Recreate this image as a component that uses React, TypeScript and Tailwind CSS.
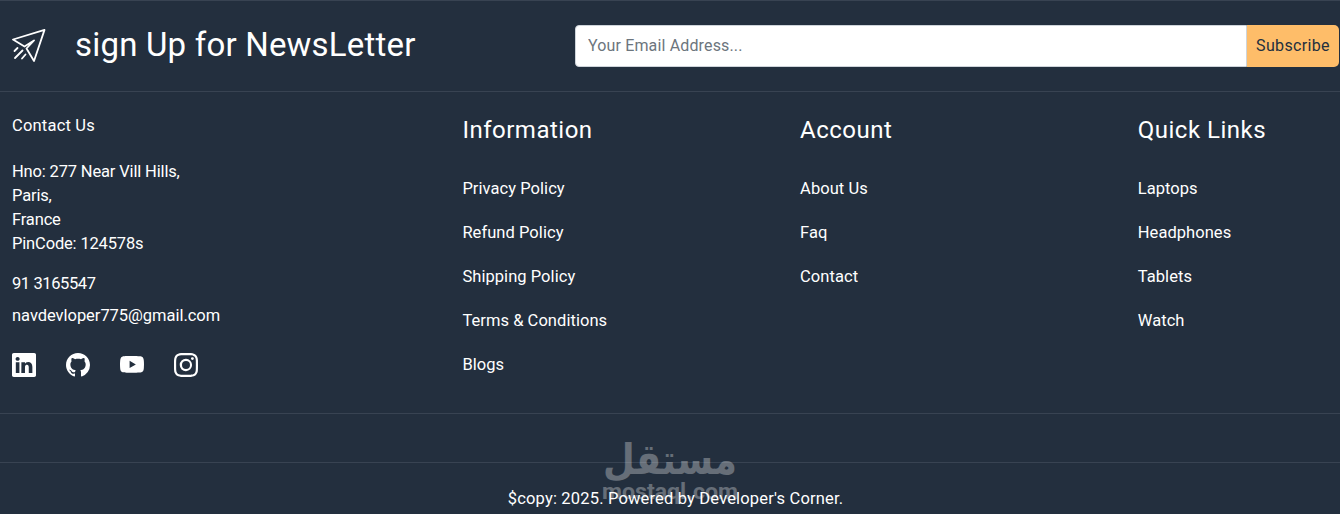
import { BsGithub, BsInstagram, BsLinkedin, BsYoutube } from 'react-icons/bs';

const socials = [
  { label: 'LinkedIn', Icon: BsLinkedin },
  { label: 'GitHub', Icon: BsGithub },
  { label: 'YouTube', Icon: BsYoutube },
  { label: 'Instagram', Icon: BsInstagram },
];

function NewsletterIcon() {
  return (
    <svg
      className="ml-3 shrink-0"
      width="34"
      height="34"
      viewBox="0 0 34 34"
      fill="none"
      stroke="white"
      strokeWidth="1.8"
      strokeLinecap="round"
      strokeLinejoin="round"
    >
      <path d="M1 10.500 32.500 .9 22 32 14.500 19.500 22 11.500 12.500 17.500Z" />
      <path d="M5.500 19 2.500 22M10.500 21.500 3 29M13.500 25.500 10 29.500" />
    </svg>
  );
}

function SubscribeForm() {
  return (
    <div className="flex h-[42px] w-[764px]">
      <input
        type="text"
        className="min-w-0 flex-1 rounded-l-[4px] border border-[#ced4da] bg-white px-3 tracking-[0.15px] text-[#212529] placeholder:text-[#6c757d]"
        placeholder="Your Email Address..."
      />
      <button className="w-[92px] rounded-r-[5px] bg-[#febd69] text-base tracking-[0.35px] text-[#232f3e]">
        Subscribe
      </button>
    </div>
  );
}

function LinkColumn({ title, links }: { title: string; links: string[] }) {
  return (
    <div className="w-[337.700px] shrink-0">
      <h4 className="mb-6 text-2xl leading-[29px] tracking-[0.5px]">{title}</h4>
      <div className="flex flex-col items-start">
        {links.map((link) => (
          <a key={link} href="#" className="mb-1 py-2 text-[16.500px] leading-6 tracking-[0.05px]">
            {link}
          </a>
        ))}
      </div>
    </div>
  );
}

function Watermark() {
  return (
    <svg
      className="pointer-events-none absolute top-[436px] left-[600px] overflow-visible opacity-30"
      width="140"
      height="72"
      viewBox="0 0 140 72"
      fill="white"
    >
      <text
        x="70"
        y="38"
        fontSize="42"
        textAnchor="middle"
        textLength="134"
        lengthAdjust="spacingAndGlyphs"
        direction="rtl"
        className="font-['DejaVu_Sans',sans-serif] font-bold"
      >
        مستقل
      </text>
      <text
        x="2"
        y="62.500"
        fontSize="22"
        textLength="136"
        lengthAdjust="spacingAndGlyphs"
        className="font-['Roboto',sans-serif] font-bold"
      >
        mostaql.com
      </text>
    </svg>
  );
}

export default function App() {
  return (
    <footer className="relative h-[514px] overflow-hidden bg-[#232f3e] font-['Roboto',sans-serif] text-white">
      <section className="flex h-[92px] items-center border-y border-[#384352]">
        <NewsletterIcon />
        <h2 className="mb-[3px] ml-[29px] text-[33px] leading-[38px] tracking-[0.2px]">
          sign Up for NewsLetter
        </h2>
        <div className="mr-px ml-auto">
          <SubscribeForm />
        </div>
      </section>

      <section className="flex h-[321px] px-3 pt-6">
        <div className="w-[450.400px] shrink-0 text-[16.500px]">
          <h5 className="-mt-0.5 leading-6 tracking-[0.2px]">Contact Us</h5>
          <address className="mt-[22px] leading-6 tracking-[-0.16px] not-italic">
            Hno: 277 Near Vill Hills,
            <br />
            Paris,
            <br />
            France
            <br />
            PinCode: 124578s
          </address>
          <a href="#" className="mt-4 block leading-6 tracking-[-0.4px]">
            91 3165547
          </a>
          <a href="#" className="mt-2 block leading-6 tracking-[-0.04px]">
            navdevloper775@gmail.com
          </a>
          <div className="mt-[25px] flex gap-[30px] text-2xl">
            {socials.map(({ label, Icon }) => (
              <a key={label} href="#" aria-label={label}>
                <Icon />
              </a>
            ))}
          </div>
        </div>
        <LinkColumn
          title="Information"
          links={['Privacy Policy', 'Refund Policy', 'Shipping Policy', 'Terms & Conditions', 'Blogs']}
        />
        <LinkColumn title="Account" links={['About Us', 'Faq', 'Contact']} />
        <LinkColumn title="Quick Links" links={['Laptops', 'Headphones', 'Tablets', 'Watch']} />
      </section>

      <section className="h-[50px] border-y border-[#384352]" />
      <p className="mt-6 pl-[11px] text-center text-[16.500px] leading-6 tracking-[0.17px]">
        $copy: 2025. Powered by Developer's Corner.
      </p>
      <Watermark />
    </footer>
  );
}
